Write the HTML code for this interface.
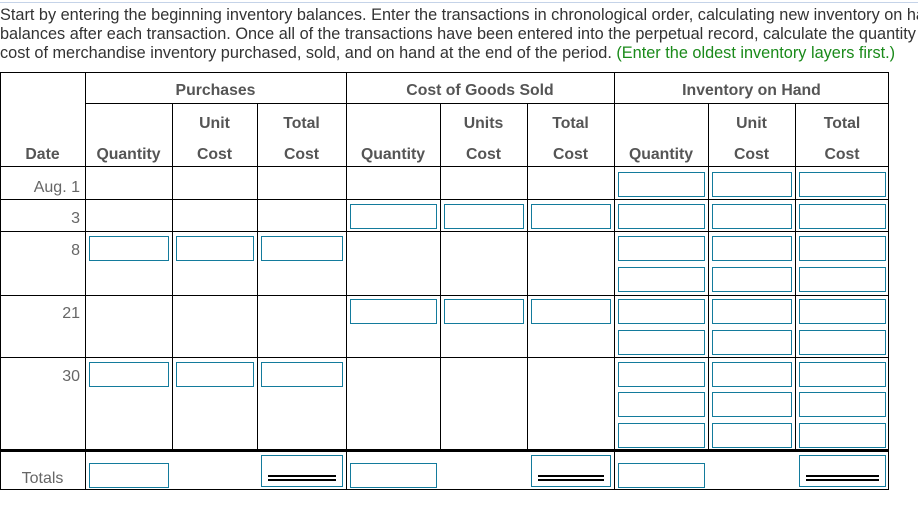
<!DOCTYPE html>
<html><head><meta charset="utf-8"><style>
body{margin:0;width:918px;height:521px;overflow:hidden;background:#fff;font-family:"Liberation Sans",Arial,sans-serif;position:relative}
.t{position:absolute;left:0;top:6px;font-size:16.3px;line-height:19px;color:#333;white-space:nowrap}
.g{color:#1a8a1a}
.l{position:absolute;background:#000}
.h{position:absolute;font-weight:bold;font-size:15.8px;color:#555;text-align:center}
.d{position:absolute;font-size:16px;color:#666;text-align:right;width:80px;left:0}
.i{position:absolute;border:1.5px solid #137b9c;box-sizing:border-box;background:#fff}
.dbl{position:absolute;left:6px;right:6px;bottom:5px;height:6px;border-top:2px solid #000;border-bottom:2px solid #000;box-sizing:border-box}
</style></head><body>
<div class="t">Start by entering the beginning inventory balances. Enter the transactions in chronological order, calculating new inventory on hand<br>balances after each transaction. Once all of the transactions have been entered into the perpetual record, calculate the quantity and<br>cost of merchandise inventory purchased, sold, and on hand at the end of the period. <span class="g">(Enter the oldest inventory layers first.)</span></div>
<div style="position:absolute;left:0;top:0;width:918px;height:6px;background:#fff"></div>
<div style="position:absolute;left:0;top:2px;width:918px;height:1px;background:#c5d3e8"></div>
<div id="tb"></div>
<div class="h" style="left:85px;width:261px;top:82px">Purchases</div>
<div class="h" style="left:346px;width:268px;top:82px">Cost of Goods Sold</div>
<div class="h" style="left:614px;width:275px;top:82px">Inventory on Hand</div>
<div class="h" style="left:0;width:85px;top:146px">Date</div>
<div class="h" style="left:85px;width:87px;top:146px">Quantity</div>
<div class="h" style="left:172px;width:85px;top:115px">Unit</div>
<div class="h" style="left:172px;width:85px;top:146px">Cost</div>
<div class="h" style="left:257px;width:89px;top:115px">Total</div>
<div class="h" style="left:257px;width:89px;top:146px">Cost</div>
<div class="h" style="left:346px;width:94px;top:146px">Quantity</div>
<div class="h" style="left:440px;width:87px;top:115px">Units</div>
<div class="h" style="left:440px;width:87px;top:146px">Cost</div>
<div class="h" style="left:527px;width:87px;top:115px">Total</div>
<div class="h" style="left:527px;width:87px;top:146px">Cost</div>
<div class="h" style="left:614px;width:94px;top:146px">Quantity</div>
<div class="h" style="left:708px;width:87px;top:115px">Unit</div>
<div class="h" style="left:708px;width:87px;top:146px">Cost</div>
<div class="h" style="left:795px;width:94px;top:115px">Total</div>
<div class="h" style="left:795px;width:94px;top:146px">Cost</div>
<div class="d" style="top:179px">Aug. 1</div>
<div class="d" style="top:210px">3</div>
<div class="d" style="top:242px">8</div>
<div class="d" style="top:305px">21</div>
<div class="d" style="top:368px">30</div>
<div class="d" style="top:470px;text-align:center;width:85px;color:#666">Totals</div>
<script>
var tb=document.getElementById('tb'),s='';
function L(x,y,w,h){s+='<div class="l" style="left:'+x+'px;top:'+y+'px;width:'+w+'px;height:'+h+'px"></div>';}
L(0,72,889,1);L(0,72,1,418);L(888,72,1,418);L(0,489,889,1);
L(85,103,804,1);L(0,166,889,1);
[199,231,295,357].forEach(function(y){L(0,y,889,1)});
L(0,449,889,3);
L(85,72,1,418);L(346,72,1,418);L(614,72,1,418);
[172,257].forEach(function(x){L(x,103,1,346)});
[440,527,708,795].forEach(function(x){L(x,103,1,346)});
var cols=[[85,172],[172,257],[257,346],[346,440],[440,527],[527,614],[614,708],[708,795],[795,889]];
function I(c,y,h,d){var a=cols[c];s+='<div class="i" style="left:'+(a[0]+4)+'px;top:'+y+'px;width:'+(a[1]-a[0]-7)+'px;height:'+(h||25)+'px">'+(d?'<div class="dbl"></div>':'')+'</div>';}
[6,7,8].forEach(function(c){I(c,172)});
[3,4,5,6,7,8].forEach(function(c){I(c,204)});
[0,1,2,6,7,8].forEach(function(c){I(c,236)});
[6,7,8].forEach(function(c){I(c,267)});
[3,4,5,6,7,8].forEach(function(c){I(c,299)});
[6,7,8].forEach(function(c){I(c,330)});
[0,1,2,6,7,8].forEach(function(c){I(c,362)});
[6,7,8].forEach(function(c){I(c,392)});
[6,7,8].forEach(function(c){I(c,423)});
I(0,463,25);I(3,463,25);I(6,463,25);
I(2,455,32,1);I(5,455,32,1);I(8,455,32,1);
tb.innerHTML=s;
</script>
</body></html>
